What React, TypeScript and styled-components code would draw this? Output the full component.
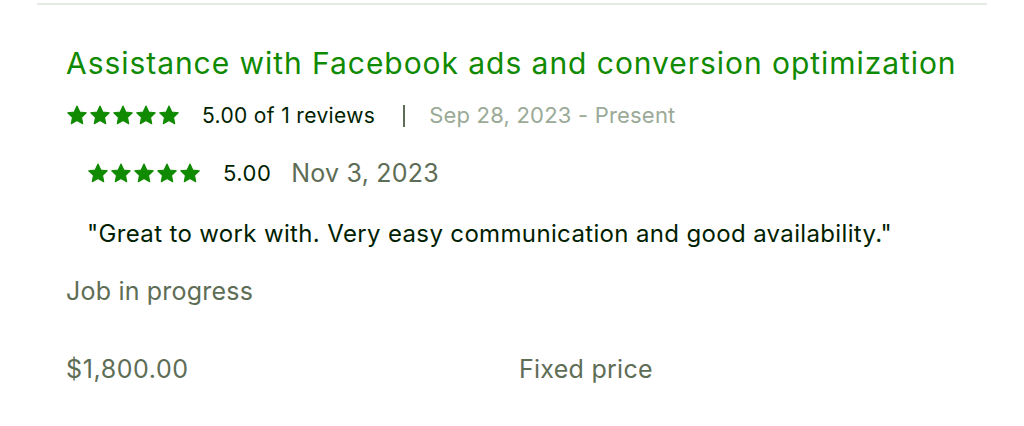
import styled, { createGlobalStyle } from 'styled-components';

const GlobalStyle = createGlobalStyle`
  html, body {
    margin: 0;
    padding: 0;
    background: #ffffff;
    font-family: Inter, "Liberation Sans", Arial, sans-serif;
  }
`;

const Page = styled.div`
  padding: 3px 37px 0 37px;
`;

const Card = styled.section`
  border-top: 2px solid #e4ebe4;
  padding: 0 29px 40px 29px;
`;

const Title = styled.h2`
  margin: 40px 0 0 0;
  font-size: 30px;
  line-height: 36px;
  font-weight: 400;
  letter-spacing: 0.95px;
  color: #108a00;
`;

const MetaRow = styled.div`
  display: flex;
  align-items: center;
  margin-top: 21px;
  height: 26px;
`;

const Stars = styled.div`
  display: flex;
  gap: 1px;
  margin-right: 22px;
`;

const RatingText = styled.span<{ $size?: number; $spacing?: number }>`
  font-size: ${p => p.$size ?? 21}px;
  letter-spacing: ${p => p.$spacing ?? 0}px;
  color: #001e00;
`;

const Separator = styled.span`
  width: 2px;
  height: 22px;
  background: #5e6d55;
  margin: 2px 24px 0 28px;
`;

const Period = styled.span`
  font-size: 22px;
  letter-spacing: 0.2px;
  color: #9aaa97;
`;

const Review = styled.div`
  padding-left: 21px;
  margin-top: 30px;
`;

const ReviewHead = styled.div`
  display: flex;
  align-items: center;
  height: 30px;
`;

const ReviewDate = styled.span`
  font-size: 25px;
  letter-spacing: 0.2px;
  color: #5e6d55;
  margin-left: 20px;
`;

const Quote = styled.p`
  margin: 31px 0 0 0;
  font-size: 24px;
  line-height: 30px;
  letter-spacing: 0.35px;
  color: #001e00;
`;

const Status = styled.div`
  margin-top: 27px;
  font-size: 25px;
  line-height: 30px;
  letter-spacing: 0.2px;
  color: #5e6d55;
`;

const Footer = styled.div`
  display: grid;
  grid-template-columns: 453px 1fr;
  margin-top: 48px;
  font-size: 25px;
  line-height: 30px;
  color: #5e6d55;
`;

const Amount = styled.span`
  letter-spacing: 0.6px;
`;

const PriceType = styled.span`
  letter-spacing: 0.27px;
`;

function Star() {
  return (
    <svg width="22" height="20" viewBox="0 0 24 22">
      <path
        d="M12 1.2l3.1 6.5 7.1.9-5.2 4.9 1.3 7.1L12 17.2l-6.3 3.4 1.3-7.1-5.2-4.9 7.1-.9z"
        fill="#108a00"
        stroke="#108a00"
        strokeWidth="1.2"
        strokeLinejoin="round"
      />
    </svg>
  );
}

function StarRow() {
  return (
    <Stars>
      {[0, 1, 2, 3, 4].map(i => (
        <Star key={i} />
      ))}
    </Stars>
  );
}

export default function App() {
  return (
    <Page>
      <GlobalStyle />
      <Card>
        <Title>Assistance with Facebook ads and conversion optimization</Title>
        <MetaRow>
          <StarRow />
          <RatingText $spacing={0.35}>5.00 of 1 reviews</RatingText>
          <Separator />
          <Period>Sep 28, 2023 - Present</Period>
        </MetaRow>
        <Review>
          <ReviewHead>
            <StarRow />
            <RatingText $size={22} $spacing={0.5}>5.00</RatingText>
            <ReviewDate>Nov 3, 2023</ReviewDate>
          </ReviewHead>
          <Quote>"Great to work with. Very easy communication and good availability."</Quote>
        </Review>
        <Status>Job in progress</Status>
        <Footer>
          <Amount>$1,800.00</Amount>
          <PriceType>Fixed price</PriceType>
        </Footer>
      </Card>
    </Page>
  );
}
